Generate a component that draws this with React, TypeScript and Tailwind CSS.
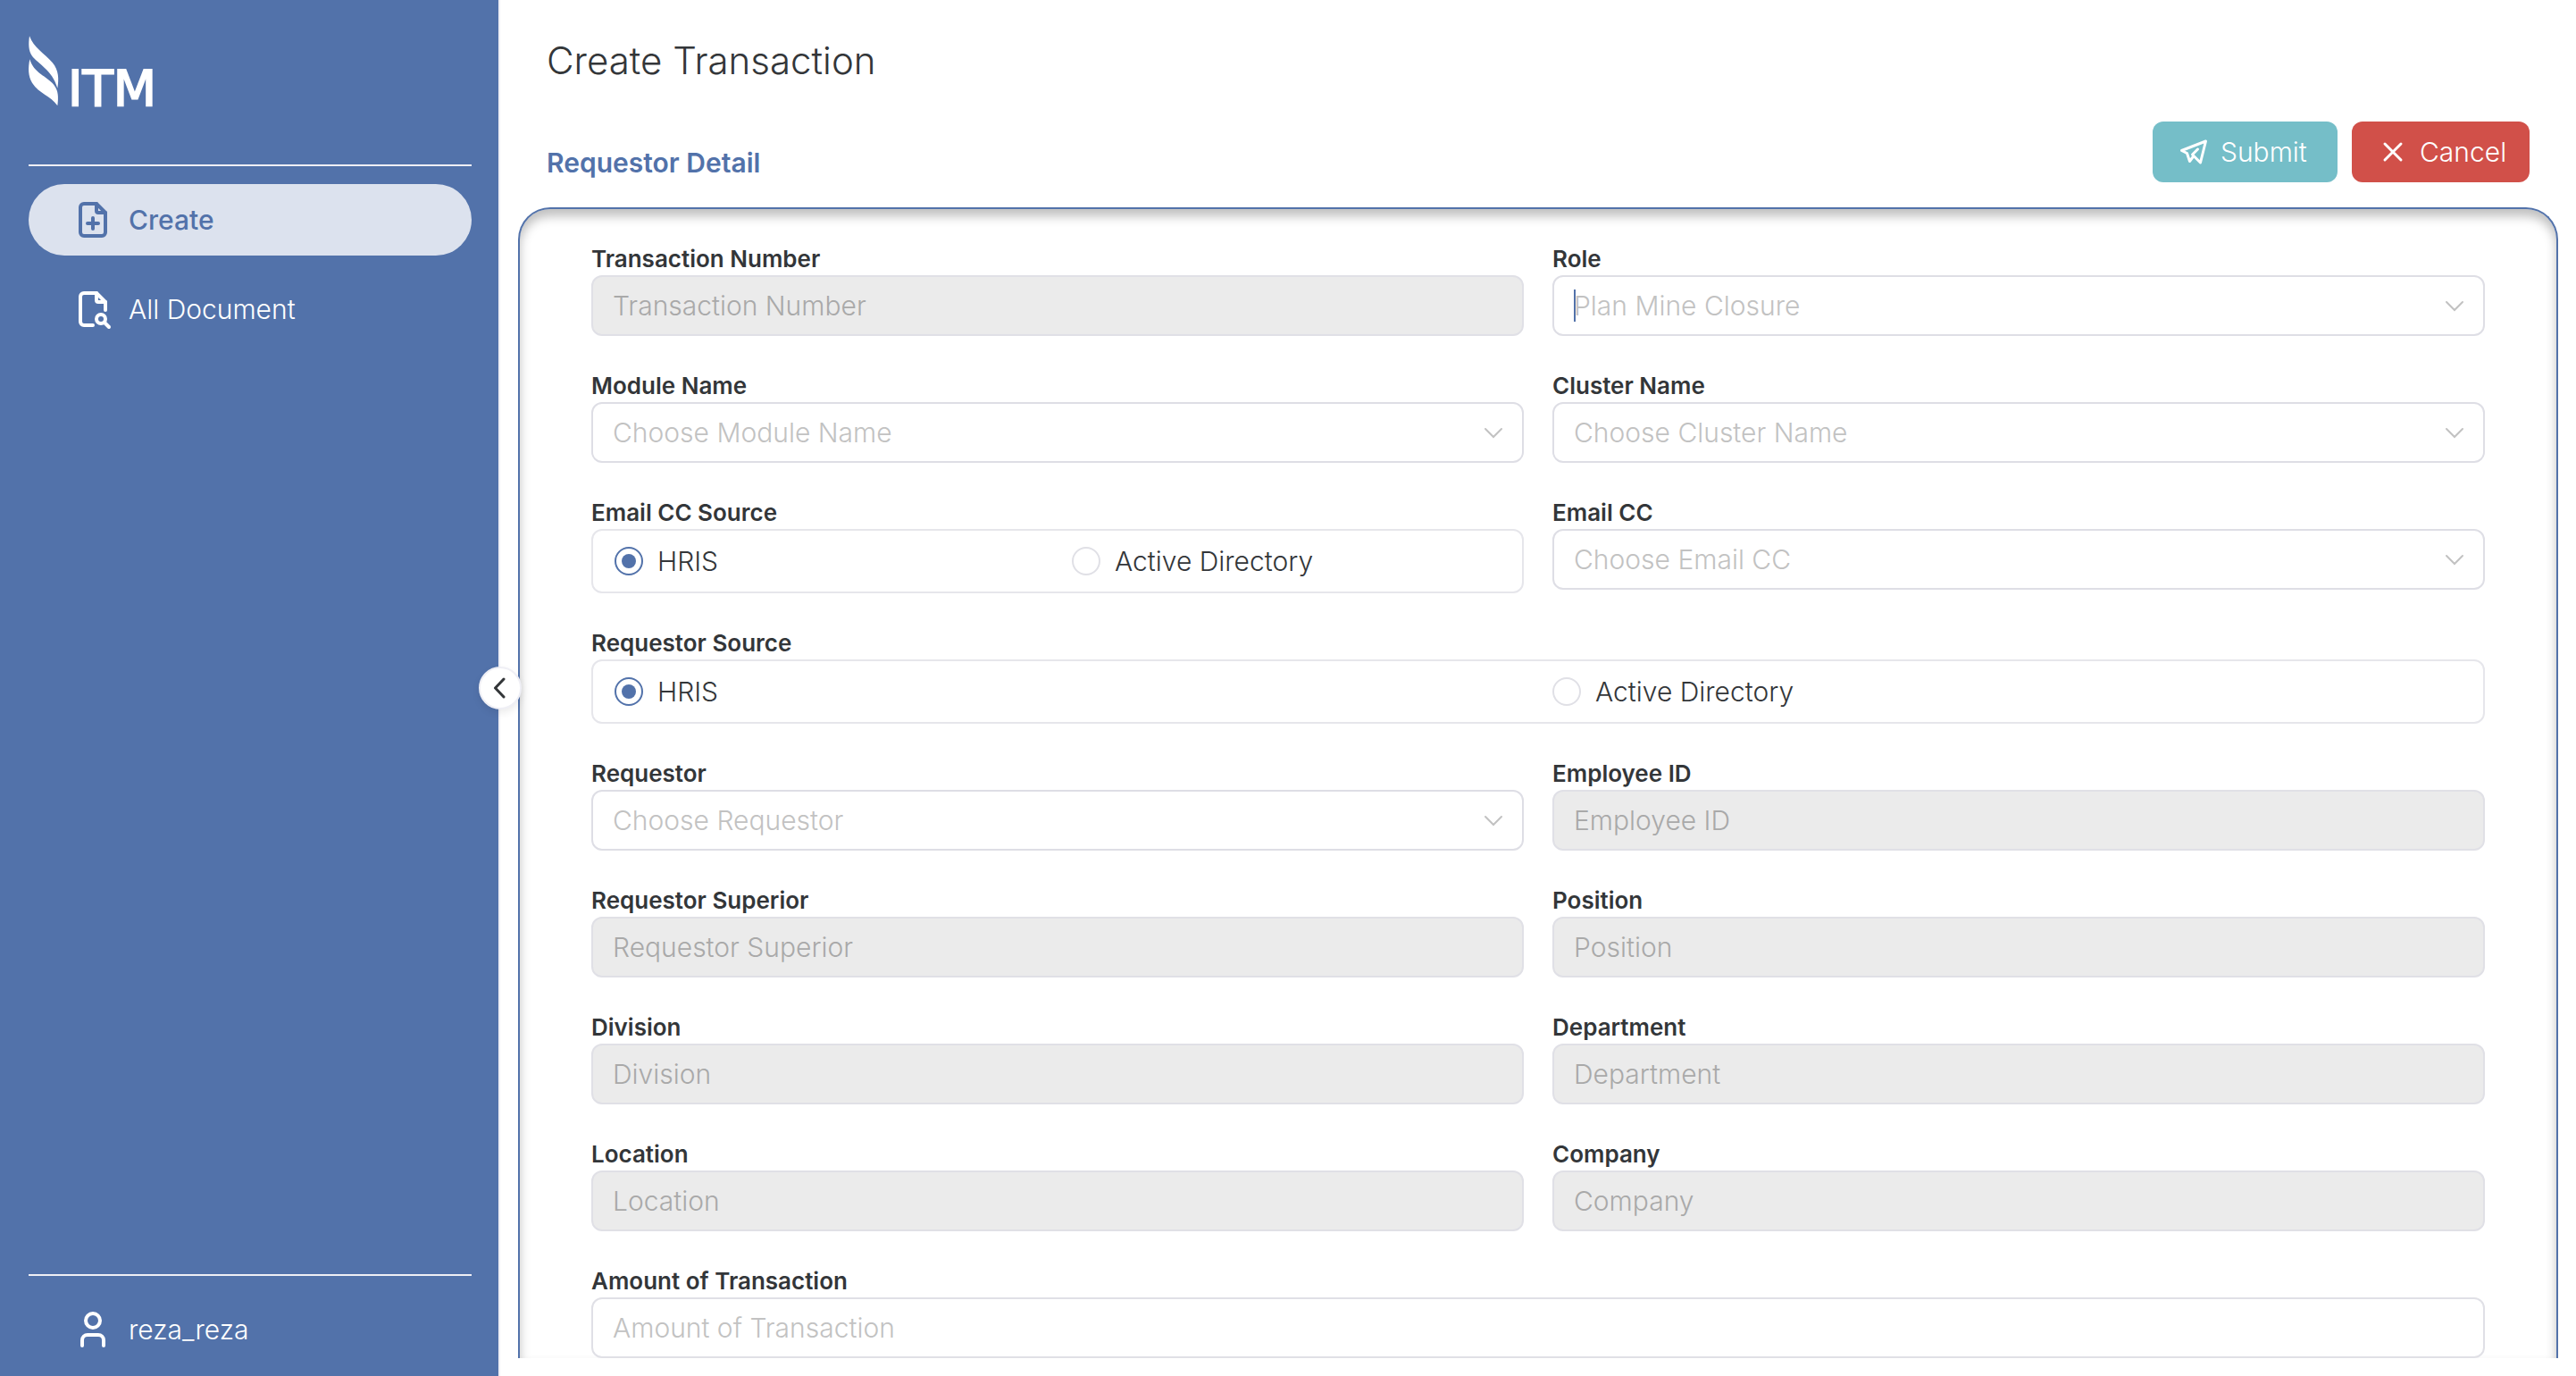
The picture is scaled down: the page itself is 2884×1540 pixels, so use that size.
import { useId } from "react";
import type { ReactNode } from "react";

function Icon({ className, strokeWidth = 2, children }: { className: string; strokeWidth?: number; children: ReactNode }) {
  return (
    <svg
      viewBox="0 0 24 24"
      fill="none"
      stroke="currentColor"
      strokeWidth={strokeWidth}
      strokeLinecap="round"
      strokeLinejoin="round"
      aria-hidden="true"
      className={"shrink-0 " + className}
    >
      {children}
    </svg>
  );
}

function Logo() {
  return (
    <svg viewBox="0 0 160 112" className="h-28 w-40 overflow-visible" fill="#fff" role="img" aria-label="ITM">
      <g transform="scale(0.3333) translate(-36 -32)">
        <path d="M39 33C35 60 36 82 47 99C66 126 116 147 133 208C138 178 138 148 116 122C91 93 52 72 39 33Z" />
        <path d="M40 111C34 140 34 168 48 190C72 228 110 232 133 267C137 238 136 216 121 197C97 167 53 158 40 111Z" />
      </g>
      <text
        x="44"
        y="78"
        fontFamily="'DejaVu Sans', sans-serif"
        fontSize="56"
        fontWeight="400"
        stroke="#fff"
        strokeWidth="2"
      >
        ITM
      </text>
    </svg>
  );
}

function FieldLabel({ id, htmlFor, children }: { id?: string; htmlFor?: string; children: ReactNode }) {
  const cls = "block pt-0.5 text-[26px] leading-9 font-semibold text-[#333639]";
  return htmlFor ? (
    <label htmlFor={htmlFor} className={cls}>{children}</label>
  ) : (
    <span id={id} className={cls}>{children}</span>
  );
}

function TextField({ label, disabled = false, wide = false }: { label: string; disabled?: boolean; wide?: boolean }) {
  const id = useId();
  return (
    <div className={wide ? "col-span-2" : ""}>
      <FieldLabel htmlFor={id}>{label}</FieldLabel>
      <input
        id={id}
        type="text"
        placeholder={label}
        disabled={disabled}
        className="block h-[68px] w-full rounded-xl border-2 border-[#e0e0e6] bg-white px-[22px] text-[30px] placeholder:text-[#c2c2c2] placeholder:opacity-100 disabled:bg-[#ebebeb] disabled:placeholder:text-[#a9a9a9]"
      />
    </div>
  );
}

function SelectField({ label, placeholder, caret = false }: { label: string; placeholder: string; caret?: boolean }) {
  const id = useId();
  return (
    <div>
      <FieldLabel htmlFor={id}>{label}</FieldLabel>
      <div className="relative">
        <select
          id={id}
          defaultValue=""
          className="block h-[68px] w-full appearance-none rounded-xl border-2 border-[#dedee5] bg-white px-[22px] text-[30px] text-[#c2c2c2] outline-none"
        >
          <option value="">{placeholder}</option>
        </select>
        {caret && <span className="absolute top-4 left-6 h-9 w-0.5 bg-[#5272aa]" />}
        <svg
          viewBox="0 0 24 14"
          fill="none"
          stroke="#c2c2c2"
          strokeWidth="2"
          strokeLinecap="round"
          aria-hidden="true"
          className="pointer-events-none absolute top-7 right-[22px] h-3.5 w-6"
        >
          <path d="M3 2L12 11L21 2" />
        </svg>
      </div>
    </div>
  );
}

function RadioField({ label, name, wide = false }: { label: string; name: string; wide?: boolean }) {
  const id = useId();
  return (
    <div className={wide ? "col-span-2" : ""} role="radiogroup" aria-labelledby={id}>
      <FieldLabel id={id}>{label}</FieldLabel>
      <div className="grid h-[72px] grid-cols-2 items-center gap-8 rounded-xl border-2 border-[#e6e6eb] px-6">
        {["HRIS", "Active Directory"].map((option, i) => (
          <label key={option} className="flex items-center gap-4 text-[30px] leading-9 text-[#333639]">
            <input
              type="radio"
              name={name}
              defaultChecked={i === 0}
              className="grid size-8 shrink-0 appearance-none place-content-center rounded-full border-2 border-[#e0e0e6] bg-white before:size-4 before:rounded-full checked:border-[#5272aa] checked:before:bg-[#5272aa]"
            />
            {option}
          </label>
        ))}
      </div>
    </div>
  );
}

function Sidebar() {
  return (
    <aside className="relative z-10 flex w-[560px] shrink-0 flex-col border-r-2 border-[#efeff5] bg-[#5272aa] pl-8 pr-[30px] text-[30px] text-white">
      <div className="h-[184px] pt-10">
        <Logo />
      </div>
      <nav className="flex grow flex-col gap-5 border-t-2 border-[#efeff5] pt-5">
        <a href="#create" aria-current="page" className="flex h-20 items-center gap-4 rounded-full bg-[#dce2ee] pl-12 font-medium text-[#5272aa]">
          <Icon className="size-12">
            <path d="M14 3v4a1 1 0 0 0 1 1h4" />
            <path d="M17 21H7a2 2 0 0 1-2-2V5a2 2 0 0 1 2-2h7l5 5v11a2 2 0 0 1-2 2z" />
            <path d="M12 11v6M9 14h6" />
          </Icon>
          Create
        </a>
        <a href="#documents" className="flex h-20 items-center gap-4 rounded-full pl-12">
          <Icon className="size-12">
            <path d="M14 3v4a1 1 0 0 0 1 1h4" />
            <path d="M12 21H7a2 2 0 0 1-2-2V5a2 2 0 0 1 2-2h7l5 5v4.5" />
            <circle cx="16.5" cy="17.5" r="2.5" />
            <path d="M18.5 19.5L21 22" />
          </Icon>
          All Document
        </a>
      </nav>
      <div className="border-t-2 border-[#efeff5] pt-5 pb-3">
        <a href="#account" className="flex h-20 items-center gap-4 pl-12">
          <Icon className="size-12">
            <circle cx="12" cy="7" r="4" />
            <path d="M6 21v-3a3 3 0 0 1 3-3h6a3 3 0 0 1 3 3v3" />
          </Icon>
          reza_reza
        </a>
      </div>
      <button
        type="button"
        aria-label="Collapse sidebar"
        className="absolute top-1/2 -right-[26px] flex size-12 -translate-y-1/2 items-center justify-center rounded-full border-2 border-[#efeff5] bg-white text-[#333639] shadow-[0_4px_8px_rgba(0,0,0,0.08)]"
      >
        <svg viewBox="0 0 48 48" fill="none" stroke="currentColor" strokeWidth="3" strokeLinecap="round" strokeLinejoin="round" className="size-12 shrink-0" aria-hidden="true">
          <path d="M28 14L18.500 24L28 34" />
        </svg>
      </button>
    </aside>
  );
}

export default function App() {
  return (
    <div className="flex h-screen bg-white font-['Inter',sans-serif] font-light">
      <Sidebar />
      <main className="flex min-w-0 grow flex-col px-5 pt-11 pb-5">
        <h1 className="px-8 text-[42px] leading-[48px] text-[#333639]">Create Transaction</h1>
        <div className="mt-11 mb-7 flex items-end justify-between px-8">
          <h2 className="pb-0.5 text-[30px] leading-10 font-semibold text-[#5272aa]">Requestor Detail</h2>
          <div className="flex gap-4 text-[30px] text-white">
            <button type="button" className="flex h-[68px] min-w-[207px] items-center gap-3 rounded-xl bg-[#75bec8] pl-7 pr-6">
              <Icon className="size-9">
                <path d="M15 10l-4 4l6 6l4-16l-18 7l4 2l2 6l3-4" />
              </Icon>
              Submit
            </button>
            <button type="button" className="flex h-[68px] min-w-[199px] items-center gap-3 rounded-xl bg-[#d15049] pl-7 pr-6">
              <Icon className="size-9">
                <path d="M18 6L6 18M6 6l12 12" />
              </Icon>
              Cancel
            </button>
          </div>
        </div>
        <form className="grid min-h-0 grow grid-cols-2 content-start gap-x-8 gap-y-9 overflow-hidden rounded-t-[36px] border-2 border-b-0 border-[#5272aa] px-20 pt-9 shadow-[inset_0_8px_12px_rgba(0,0,0,0.25)]">
          <TextField label="Transaction Number" disabled />
          <SelectField label="Role" placeholder="Plan Mine Closure" caret />
          <SelectField label="Module Name" placeholder="Choose Module Name" />
          <SelectField label="Cluster Name" placeholder="Choose Cluster Name" />
          <RadioField label="Email CC Source" name="email-source" />
          <SelectField label="Email CC" placeholder="Choose Email CC" />
          <RadioField label="Requestor Source" name="requestor-source" wide />
          <SelectField label="Requestor" placeholder="Choose Requestor" />
          <TextField label="Employee ID" disabled />
          <TextField label="Requestor Superior" disabled />
          <TextField label="Position" disabled />
          <TextField label="Division" disabled />
          <TextField label="Department" disabled />
          <TextField label="Location" disabled />
          <TextField label="Company" disabled />
          <TextField label="Amount of Transaction" wide />
        </form>
      </main>
    </div>
  );
}
